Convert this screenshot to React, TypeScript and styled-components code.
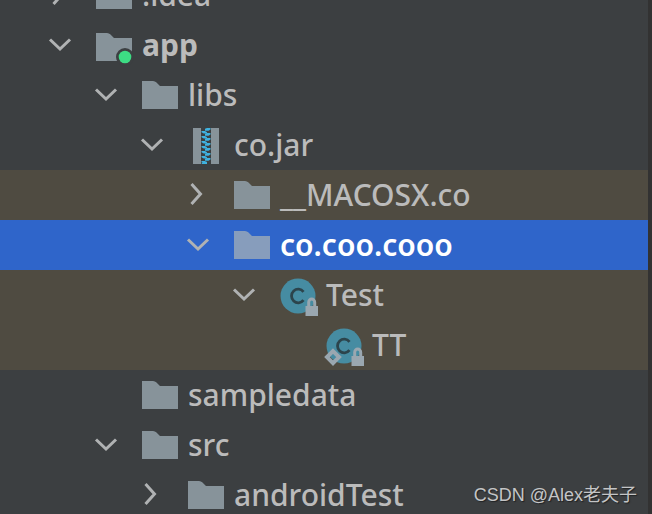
import React, { useState } from "react";
import styled, { createGlobalStyle } from "styled-components";

type IconKind = "folder" | "module" | "jar" | "class" | "nested";
type Tone = "plain" | "library" | "selected";

interface Entry {
  name: string;
  level: number;
  icon: IconKind;
  open?: boolean;
  tone?: Tone;
  weight?: number;
}

const entries: Entry[] = [
  { name: ".idea", level: 0, icon: "folder", open: false },
  { name: "app", level: 0, icon: "module", open: true, weight: 700 },
  { name: "libs", level: 1, icon: "folder", open: true },
  { name: "co.jar", level: 2, icon: "jar", open: true },
  { name: "__MACOSX.co", level: 3, icon: "folder", open: false, tone: "library" },
  { name: "co.coo.cooo", level: 3, icon: "folder", open: true, tone: "selected", weight: 600 },
  { name: "Test", level: 4, icon: "class", open: true, tone: "library" },
  { name: "TT", level: 5, icon: "nested", tone: "library" },
  { name: "sampledata", level: 1, icon: "folder" },
  { name: "src", level: 1, icon: "folder", open: true },
  { name: "androidTest", level: 2, icon: "folder", open: false },
];

const rowColors: Record<Tone, string> = {
  plain: "transparent",
  library: "#4f4b41",
  selected: "#2f65ca",
};

const GlobalStyle = createGlobalStyle`
  * { box-sizing: border-box; }
  body { margin: 0; background: #3c3f41; }
`;

const Panel = styled.main`
  position: relative;
  height: 100vh;
  overflow: hidden;
  background: #3c3f41;
  border-right: 4px solid #323232;
  font-family: "Noto Sans", "Noto Sans CJK SC", sans-serif;
`;

const Tree = styled.ul`
  list-style: none;
  margin: -30px 0 0;
  padding: 0;
`;

const Row = styled.li<{ $level: number; $tone: Tone }>`
  display: flex;
  align-items: center;
  gap: 10px;
  height: 50px;
  padding-left: ${(p) => 34 + p.$level * 46}px;
  background: ${(p) => rowColors[p.$tone]};
  color: ${(p) => (p.$tone === "selected" ? "#ffffff" : "#bbbbbb")};
`;

const Toggle = styled.button`
  display: flex;
  justify-content: center;
  flex: none;
  width: 52px;
  padding: 0;
  border: 0;
  background: none;
  color: #b0b2b3;
  cursor: pointer;
`;

const ToggleSpace = styled.span`
  flex: none;
  width: 52px;
`;

const Glyph = styled.svg`
  flex: none;
  display: block;
  overflow: visible;
`;

const Label = styled.span<{ $weight: number }>`
  font-size: 30px;
  line-height: 50px;
  font-weight: ${(p) => p.$weight};
  white-space: nowrap;
`;

const Watermark = styled.footer`
  position: absolute;
  right: 11px;
  bottom: 6px;
  font-family: "Liberation Sans", "Noto Sans CJK SC", sans-serif;
  font-size: 18px;
  line-height: 26px;
  color: #c4c5c6;
  text-shadow: 1px 1px 1px #202224;
  white-space: nowrap;
`;

function Chevron({ open }: { open: boolean }) {
  return (
    <Glyph width="36" height="36" viewBox="0 0 36 36" aria-hidden="true">
      <path
        d={open ? "M8 12.5 18 22 28 12.5" : "M11.5 7 20.5 17 11.5 27"}
        fill="none"
        stroke="currentColor"
        strokeWidth="3"
      />
    </Glyph>
  );
}

function Lock() {
  return (
    <g>
      <path d="M28.7 30V25.3a3 3.3 0 0 1 6 0V30" fill="none" stroke="#9aa7b0" strokeWidth="3" />
      <path d="M25.5 29H38V39H25.5Z" fill="#9aa7b0" />
    </g>
  );
}

function ClassMark() {
  return (
    <g>
      <circle cx="18" cy="19" r="17.5" fill="#468ca2" />
      <path
        d="M23.5 14.8A6.7 6.8 0 1 0 23.5 23.2"
        fill="none"
        stroke="#2c444c"
        strokeWidth="2.8"
      />
    </g>
  );
}

const folderPath = "M0 4H11Q13 4 14.5 5.5L18 9H36V32H0Z";
const teeth = [0, 1, 2, 3, 4, 5, 6];

function EntryIcon({ kind, selected }: { kind: IconKind; selected: boolean }) {
  return (
    <Glyph width="36" height="36" viewBox="0 0 36 36" aria-hidden="true">
      {kind === "folder" && <path d={folderPath} fill={selected ? "#879dbc" : "#87939a"} />}
      {kind === "module" && (
        <g>
          <path d={folderPath} transform="translate(0 2)" fill="#87939a" />
          <circle cx="29" cy="30" r="9" fill="#3c3f41" />
          <circle cx="29" cy="30" r="6.3" fill="#3ddc84" />
        </g>
      )}
      {kind === "jar" && (
        <g>
          <path d="M5 1H13V37H5ZM23 1H31V37H23Z" fill="#87939a" />
          {teeth.map((n) => (
            <g key={n} fill="#3fb2e0">
              <path d={`M17 ${1.8 + n * 5}l2-.8h3.5v1.6l-2 1.2H17Z`} />
              <path d={`M13.5 ${4 + n * 5}H17l2 1.2v1.2h-3.2l-2.3-1.2Z`} />
            </g>
          ))}
          <path d="M13.5 36H17L19 34.5V37H14Z" fill="#3fb2e0" />
        </g>
      )}
      {kind === "class" && (
        <g>
          <ClassMark />
          <Lock />
        </g>
      )}
      {kind === "nested" && (
        <g>
          <ClassMark />
          <path
            d="M7 24.1 13 30.1 7 36.1 1 30.1Z"
            fill="none"
            stroke="#9aa7b0"
            strokeWidth="4"
          />
          <Lock />
        </g>
      )}
    </Glyph>
  );
}

function TreeRow({ entry }: { entry: Entry }) {
  const [open, setOpen] = useState(entry.open ?? false);
  const tone = entry.tone ?? "plain";
  return (
    <Row $level={entry.level} $tone={tone}>
      {entry.open === undefined ? (
        <ToggleSpace />
      ) : (
        <Toggle
          type="button"
          aria-expanded={open}
          aria-label={entry.name}
          onClick={() => setOpen(!open)}
        >
          <Chevron open={open} />
        </Toggle>
      )}
      <EntryIcon kind={entry.icon} selected={tone === "selected"} />
      <Label $weight={entry.weight ?? 500}>{entry.name}</Label>
    </Row>
  );
}

export default function App() {
  return (
    <>
      <GlobalStyle />
      <Panel>
        <Tree>
          {entries.map((entry) => (
            <TreeRow key={entry.name} entry={entry} />
          ))}
        </Tree>
        <Watermark>CSDN @Alex老夫子</Watermark>
      </Panel>
    </>
  );
}
